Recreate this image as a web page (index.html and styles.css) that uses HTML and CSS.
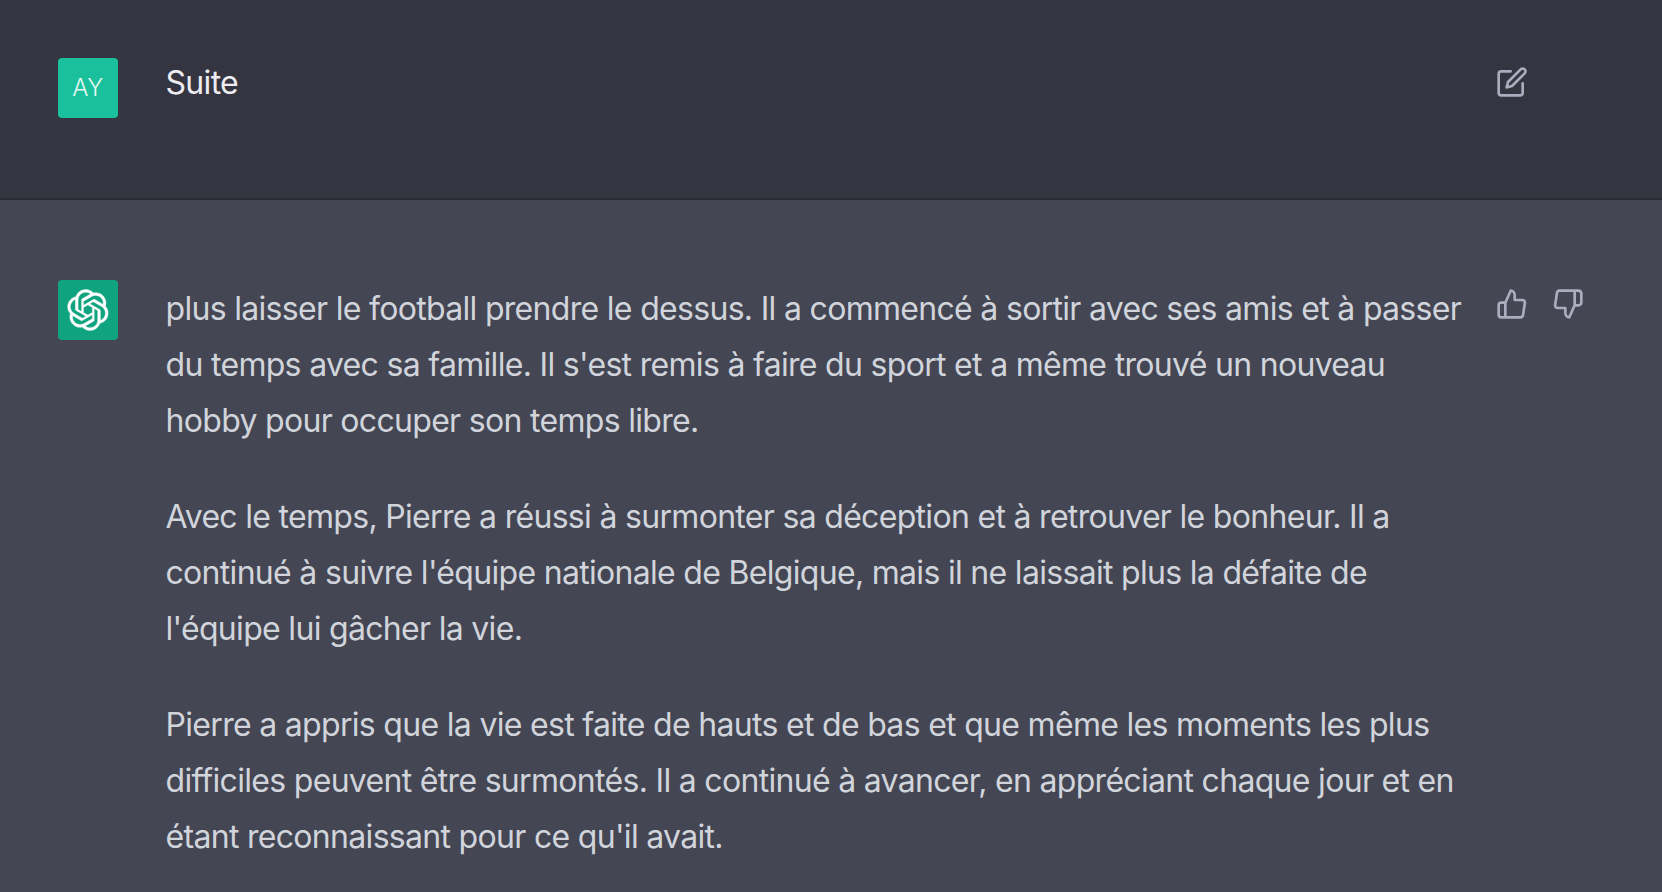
FILE: index.html
```html
<!DOCTYPE html>
<html lang="fr">
<head>
<meta charset="utf-8">
<title>Suite</title>
<link rel="stylesheet" href="styles.css">
</head>
<body>
<section class="row row-user">
  <div class="avatar avatar-user">AY</div>
  <div class="content user-text">Suite</div>
  <div class="actions actions-user">
    <svg class="icon" viewBox="0 0 24 24"><path d="M11 4H4a2 2 0 0 0-2 2v14a2 2 0 0 0 2 2h14a2 2 0 0 0 2-2v-7"/><path d="M18.5 2.5a2.121 2.121 0 0 1 3 3L12 15l-4 1 1-4 9.5-9.5z"/></svg>
  </div>
</section>
<section class="row row-bot">
  <div class="avatar avatar-bot">
    <svg class="logo" viewBox="0 0 41 41"><path d="M37.5324 16.8707C37.9808 15.5241 38.1363 14.0974 37.9886 12.6859C37.8409 11.2744 37.3934 9.91076 36.676 8.68622C35.6126 6.83404 33.9882 5.3676 32.0373 4.4985C30.0864 3.62941 27.9098 3.40259 25.8215 3.85078C24.8796 2.7893 23.7219 1.94125 22.4257 1.36341C21.1295 0.785575 19.7249 0.491269 18.3058 0.500197C16.1708 0.495044 14.0893 1.16803 12.3614 2.42214C10.6335 3.67624 9.34853 5.44666 8.6917 7.47815C7.30085 7.76286 5.98686 8.3414 4.8377 9.17505C3.68854 10.0087 2.73073 11.0782 2.02839 12.312C0.956464 14.1591 0.498905 16.2988 0.721698 18.4228C0.944492 20.5467 1.83612 22.5449 3.268 24.1293C2.81966 25.4759 2.66413 26.9026 2.81182 28.3141C2.95951 29.7256 3.40701 31.0892 4.12437 32.3138C5.18791 34.1659 6.8123 35.6322 8.76321 36.5013C10.7141 37.3704 12.8907 37.5973 14.9789 37.1492C15.9208 38.2107 17.0786 39.0587 18.3747 39.6366C19.6709 40.2144 21.0755 40.5087 22.4946 40.4998C24.6307 40.5054 26.7133 39.8321 28.4418 38.5772C30.1704 37.3223 31.4556 35.5506 32.1119 33.5179C33.5027 33.2332 34.8167 32.6547 35.9659 31.821C37.115 30.9874 38.0728 29.9178 38.7752 28.684C39.8458 26.8371 40.3023 24.6979 40.0789 22.5748C39.8556 20.4517 38.9639 18.4544 37.5324 16.8707ZM22.4978 37.8849C20.7443 37.8874 19.0459 37.2733 17.6994 36.1501C17.7601 36.117 17.8666 36.0586 17.936 36.0161L25.9004 31.4156C26.1003 31.3019 26.2663 31.137 26.3813 30.9378C26.4964 30.7386 26.5563 30.5124 26.5549 30.2825V19.0542L29.9213 20.998C29.9389 21.0068 29.9541 21.0198 29.9656 21.0359C29.977 21.052 29.9842 21.0707 29.9867 21.0902V30.3889C29.9842 32.375 29.1946 34.2791 27.7909 35.6841C26.3872 37.0892 24.4838 37.8806 22.4978 37.8849ZM6.39227 31.0064C5.51397 29.4888 5.19742 27.7107 5.49804 25.9832C5.55718 26.0187 5.66048 26.0818 5.73461 26.1244L13.699 30.7248C13.8975 30.8408 14.1233 30.902 14.3532 30.902C14.583 30.902 14.8088 30.8408 15.0073 30.7248L24.731 25.1103V28.9979C24.7321 29.0177 24.7283 29.0376 24.7199 29.0556C24.7115 29.0736 24.6988 29.0893 24.6829 29.1012L16.6317 33.7497C14.9096 34.7416 12.8643 35.0097 10.9447 34.4954C9.02506 33.9811 7.38785 32.7263 6.39227 31.0064ZM4.29707 13.6194C5.17156 12.0998 6.55279 10.9364 8.19885 10.3327C8.19885 10.4013 8.19491 10.5228 8.19491 10.6071V19.808C8.19351 20.0378 8.25334 20.2638 8.36823 20.4629C8.48312 20.6619 8.64893 20.8267 8.84863 20.9404L18.5723 26.5542L15.206 28.4979C15.1894 28.5089 15.1703 28.5155 15.1505 28.5173C15.1307 28.5191 15.1107 28.516 15.0924 28.5082L7.04046 23.8557C5.32135 22.8601 4.06716 21.2235 3.55289 19.3046C3.03862 17.3858 3.30624 15.3413 4.29707 13.6194ZM31.955 20.0556L22.2312 14.4411L25.5976 12.4981C25.6142 12.4872 25.6333 12.4805 25.6531 12.4787C25.6729 12.4769 25.6928 12.4801 25.7111 12.4879L33.7631 17.1364C34.9967 17.849 36.0017 18.8982 36.6606 20.1613C37.3194 21.4244 37.6047 22.849 37.4832 24.2684C37.3617 25.6878 36.8382 27.0432 35.9743 28.1759C35.1103 29.3086 33.9415 30.1717 32.6047 30.6641C32.6047 30.5947 32.6047 30.4733 32.6047 30.3889V21.188C32.6066 20.9586 32.5474 20.7328 32.4332 20.5338C32.319 20.3348 32.154 20.1698 31.955 20.0556ZM35.3055 15.0128C35.2464 14.9765 35.1431 14.9142 35.069 14.8717L27.1045 10.2712C26.906 10.1554 26.6803 10.0943 26.4504 10.0943C26.2206 10.0943 25.9948 10.1554 25.7963 10.2712L16.0726 15.8858V11.9982C16.0715 11.9783 16.0753 11.9585 16.0837 11.9405C16.0921 11.9225 16.1048 11.9068 16.1207 11.8949L24.1719 7.25025C25.4053 6.53903 26.8158 6.19376 28.2383 6.25482C29.6608 6.31589 31.0364 6.78077 32.2044 7.59508C33.3723 8.40939 34.2842 9.53945 34.8334 10.8531C35.3826 12.1667 35.5464 13.6095 35.3055 15.0128ZM14.2424 21.9419L10.8752 19.9981C10.8576 19.9893 10.8423 19.9763 10.8309 19.9602C10.8195 19.9441 10.8122 19.9254 10.8098 19.9058V10.6071C10.8107 9.18295 11.2173 7.78848 11.9819 6.58696C12.7466 5.38544 13.8377 4.42659 15.1275 3.82264C16.4173 3.21869 17.8524 2.99464 19.2649 3.1767C20.6775 3.35876 22.0089 3.93941 23.1034 4.85067C23.0427 4.88379 22.937 4.94215 22.8668 4.98473L14.9024 9.58517C14.7025 9.69878 14.5366 9.86356 14.4215 10.0626C14.3065 10.2616 14.2466 10.4877 14.2479 10.7175L14.2424 21.9419ZM16.071 17.9991L20.4018 15.4978L24.7325 17.9975V22.9985L20.4018 25.4983L16.071 22.9985V17.9991Z"/></svg>
  </div>
  <div class="content">
    <p>plus laisser le football prendre le dessus. Il a commencé à sortir avec ses amis et à passer du temps avec sa famille. Il s'est remis à faire du sport et a même trouvé un nouveau hobby pour occuper son temps libre.</p>
    <p>Avec le temps, Pierre a réussi à surmonter sa déception et à retrouver le bonheur. Il a continué à suivre l'équipe nationale de Belgique, mais il ne laissait plus la défaite de l'équipe lui gâcher la vie.</p>
    <p>Pierre a appris que la vie est faite de hauts et de bas et que même les moments les plus difficiles peuvent être surmontés. Il a continué à avancer, en appréciant chaque jour et en étant reconnaissant pour ce qu'il avait.</p>
  </div>
  <div class="actions">
    <svg class="icon" viewBox="0 0 24 24"><path d="M14 9V5a3 3 0 0 0-3-3l-4 9v11h11.28a2 2 0 0 0 2-1.7l1.38-9a2 2 0 0 0-2-2.3zM7 22H4a2 2 0 0 1-2-2v-7a2 2 0 0 1 2-2h3"/></svg>
    <svg class="icon" viewBox="0 0 24 24"><path d="M10 15v4a3 3 0 0 0 3 3l4-9V2H5.72a2 2 0 0 0-2 1.7l-1.38 9a2 2 0 0 0 2 2.3zm7-13h2.67A2.31 2.31 0 0 1 22 4v7a2.31 2.31 0 0 1-2.33 2H17"/></svg>
  </div>
</section>
</body>
</html>
```
FILE: styles.css
```css
html, body {
  margin: 0;
  height: 100%;
  overflow: hidden;
  background: #444654;
}
body {
  font-family: Inter, "Liberation Sans", sans-serif;
  font-size: 32px;
  line-height: 56px;
  letter-spacing: -0.69px;
  color: #d1d5db;
  -webkit-font-smoothing: antialiased;
}
.row {
  display: flex;
  align-items: flex-start;
  gap: 47.5px;
  padding-left: 58px;
}
.row-user {
  background: #343541;
  padding-top: 55px;
  height: 143px;
  border-bottom: 2px solid #2a2b32;
}
.row-bot {
  background: #444654;
  padding-top: 80px;
}
.avatar {
  flex: none;
  width: 60px;
  height: 60px;
  border-radius: 4px;
  display: flex;
  align-items: center;
  justify-content: center;
}
.avatar-user {
  margin-top: 3px;
  background: #19c09b;
  color: #e4f8f2;
  font-size: 24px;
  font-weight: 300;
  line-height: 60px;
  letter-spacing: 0.6px;
}
.avatar-bot {
  background: #10a37f;
}
.logo {
  width: 42px;
  height: 42px;
  fill: #fff;
  stroke: #fff;
  stroke-width: 0.4;
}
.content {
  flex: none;
  width: 1300px;
  padding-top: 1px;
}
.user-text {
  color: #ececf1;
  padding-top: 0;
}
.content p {
  margin: 0 0 40px;
}
.actions {
  flex: none;
  display: flex;
  gap: 24px;
  margin-left: -17.5px;
  padding-top: 8px;
}
.actions-user {
  padding-top: 11px;
}
.icon {
  width: 32px;
  height: 32px;
  fill: none;
  stroke: #acacbe;
  stroke-width: 2;
  stroke-linecap: round;
  stroke-linejoin: round;
}
```
